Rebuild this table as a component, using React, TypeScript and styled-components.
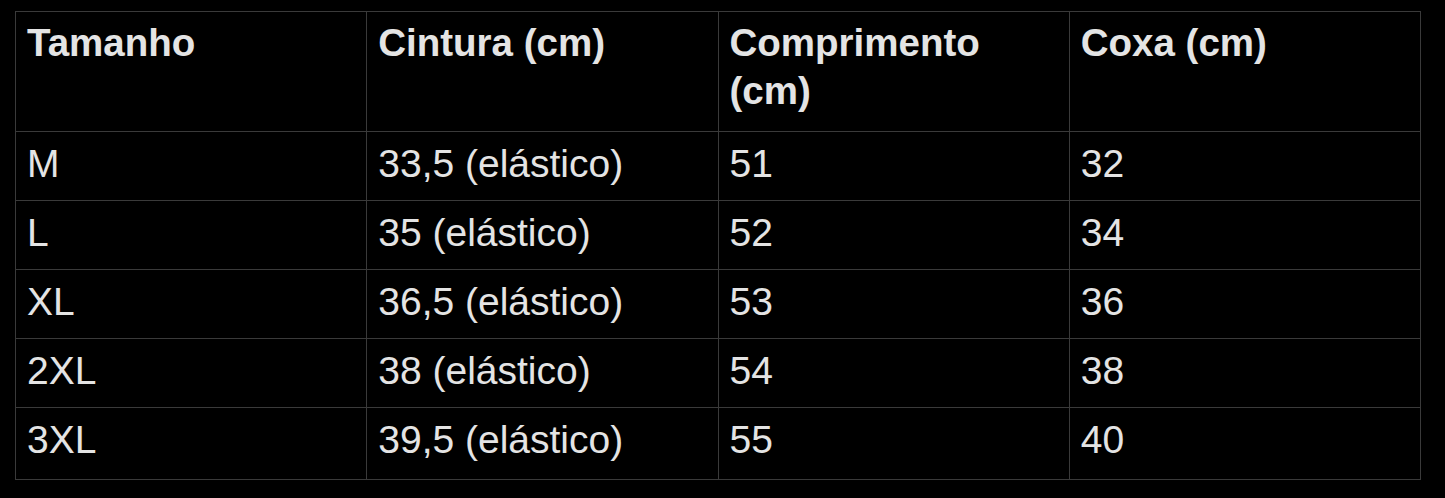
import styled, { createGlobalStyle } from "styled-components";

const Global = createGlobalStyle`
body{
    margin:0;
    background:#000;
}
`;
const Page = styled.div`
padding: 11px 0 0 15px;
height: 498px;
box-sizing: border-box;
background:#000;
`;
const Table = styled.table`
width: 1406px;
border-collapse: collapse;
table-layout: fixed;
color: #e4e4e4;
font-family: "Liberation Sans", Arial, sans-serif;
`;
const Head = styled.th`
border: 1px solid #3a3a3a;
text-align: left;
vertical-align: top;
height: 120px;
box-sizing: border-box;
padding: 7px 26px 0 11px;
font-size: 38.5px;
line-height: 48px;
font-weight: 700;
`;
const Row = styled.tr`
&:last-child td{
    height: 72px;
}
`;
const Cell = styled.td`
border: 1px solid #3a3a3a;
vertical-align: top;
height: 69px;
box-sizing: border-box;
padding: 8px 11px 0 11px;
font-size: 39px;
line-height: 48px;
`;
interface Isize{
    size:string;
    waist:string;
    length:string;
    thigh:string;
}
const sizes: Isize[] = [
    {size:"M", waist:"33,5 (elástico)", length:"51", thigh:"32"},
    {size:"L", waist:"35 (elástico)", length:"52", thigh:"34"},
    {size:"XL", waist:"36,5 (elástico)", length:"53", thigh:"36"},
    {size:"2XL", waist:"38 (elástico)", length:"54", thigh:"38"},
    {size:"3XL", waist:"39,5 (elástico)", length:"55", thigh:"40"},
];
function App(){
    return (
        <Page>
            <Global/>
            <Table>
                <thead>
                    <tr>
                        <Head>Tamanho</Head>
                        <Head>Cintura (cm)</Head>
                        <Head>Comprimento (cm)</Head>
                        <Head>Coxa (cm)</Head>
                    </tr>
                </thead>
                <tbody>
                {sizes.map((s)=>
                    <Row key={s.size}>
                        <Cell>{s.size}</Cell>
                        <Cell>{s.waist}</Cell>
                        <Cell>{s.length}</Cell>
                        <Cell>{s.thigh}</Cell>
                    </Row>
                )}
                </tbody>
            </Table>
        </Page>
    );
}

export default App;
